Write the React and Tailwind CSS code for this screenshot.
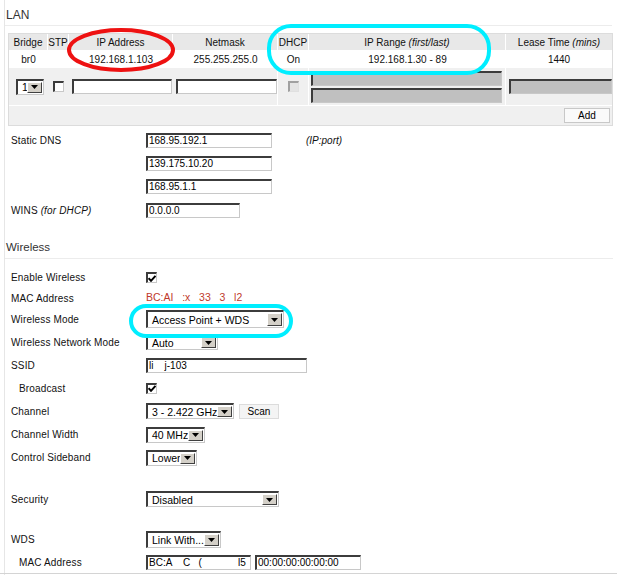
import React from 'react';

const font = { fontFamily: "'Liberation Sans', Arial, sans-serif" };

const Field = ({ w, children, disabled, className = '' }) => (
  <div
    className={`h-[15px] border-t-2 border-l-2 border-r border-b border-t-[#3c3c3c] border-l-[#3c3c3c] border-r-[#c8c8c8] border-b-[#c8c8c8] pl-[1px] text-[10px] leading-[12px] text-black whitespace-pre overflow-hidden ${disabled ? 'bg-[#c0c0c0]' : 'bg-white'} ${className}`}
    style={{ width: w }}
  >
    {children}
  </div>
);

const Arrow = () => (
  <div className="w-[15px] h-full bg-[#d4d0c8] border border-t-white border-l-white border-r-[#404040] border-b-[#404040] flex items-center justify-center shrink-0">
    <svg width="7" height="4" viewBox="0 0 7 4">
      <path d="M0 0h7L3.5 4z" fill="#000" />
    </svg>
  </div>
);

const Select = ({ w, h = 16, children }) => (
  <div
    className="flex border-t-2 border-l-2 border-r border-b border-t-[#3c3c3c] border-l-[#3c3c3c] border-r-[#c8c8c8] border-b-[#c8c8c8] bg-white p-[1px]"
    style={{ width: w, height: h }}
  >
    <div className="flex-1 pl-[3px] text-[10.5px] leading-[12px] flex items-center text-black whitespace-nowrap overflow-hidden">{children}</div>
    <Arrow />
  </div>
);

const Check = ({ checked, disabled }) => (
  <div
    className={`w-[11px] h-[11px] border-t-2 border-l-2 border-r border-b flex items-center justify-center ${
      disabled
        ? 'bg-[#e4e4e4] border-t-[#a0a0a0] border-l-[#a0a0a0] border-r-[#e0e0e0] border-b-[#e0e0e0]'
        : 'bg-white border-t-[#3c3c3c] border-l-[#3c3c3c] border-r-[#c8c8c8] border-b-[#c8c8c8]'
    }`}
  >
    {checked && (
      <svg width="8" height="7" viewBox="0 0 8 7">
        <path d="M0.5 3.2 L3 5.8 L7.5 0.8" stroke="#000" strokeWidth="2" fill="none" />
      </svg>
    )}
  </div>
);

const Row = ({ h, label, indent, children }) => (
  <div className="flex items-center" style={{ height: h }}>
    <div className={`w-[141px] shrink-0 text-[10px] tracking-[0.15px] text-[#111] ${indent ? 'pl-[14px]' : 'pl-[6px]'}`}>
      {label}
    </div>
    <div className="flex items-center gap-[4px]">{children}</div>
  </div>
);

const cols = [39, 21, 104, 105, 31, 197];

export default function App() {
  return (
    <div className="relative w-[617px] h-[575px] overflow-hidden bg-white" style={font}>
      <div className="ml-[4px] mr-[5px] border-l border-[#e6e6e6] h-full">
        {/* LAN */}
        <div className="h-[26px] pt-[6px] pl-[1px] text-[12px] text-[#333] border-b border-[#ececec]">LAN</div>

        <div className="mt-[7px] ml-[3px] w-[605px] border border-[#dcdcdc] text-[10px] text-[#111]">
          <div className="flex h-[16px] bg-[#e8e8e8]">
            {['Bridge', 'STP', 'IP Address', 'Netmask', 'DHCP'].map((t, i) => (
              <div key={t} className="flex items-center justify-center border-r border-white" style={{ width: cols[i] }}>
                {t}
              </div>
            ))}
            <div className="flex items-center justify-center border-r border-white" style={{ width: cols[5] }}>
              IP Range&nbsp;<i>(first/last)</i>
            </div>
            <div className="flex-1 flex items-center justify-center">
              Lease Time&nbsp;<i>(mins)</i>
            </div>
          </div>
          <div className="flex h-[18px] bg-white">
            {['br0', '', '192.168.1.103', '255.255.255.0', 'On', '192.168.1.30 - 89'].map((t, i) => (
              <div key={i} className="flex items-center justify-center" style={{ width: cols[i] }}>
                {t}
              </div>
            ))}
            <div className="flex-1 flex items-center justify-center">1440</div>
          </div>
          <div className="flex h-[38px] bg-[#f0f0f0] border-b border-white">
            <div className="flex items-center justify-end pr-[4px]" style={{ width: cols[0] }}>
              <Select w={28} h={16}>1</Select>
            </div>
            <div className="flex items-center justify-center" style={{ width: cols[1] }}>
              <Check />
            </div>
            <div className="flex items-center justify-end pr-[1px]" style={{ width: cols[2] }}>
              <Field w={100} />
            </div>
            <div className="flex items-center justify-start pl-[3px] border-r border-white" style={{ width: cols[3] }}>
              <Field w={101} />
            </div>
            <div className="flex items-center justify-center border-r border-white" style={{ width: cols[4] }}>
              <Check disabled />
            </div>
            <div className="flex flex-col justify-center gap-[2px] pl-[2px] border-r border-white" style={{ width: cols[5] }}>
              <Field w={191} disabled />
              <Field w={191} disabled />
            </div>
            <div className="flex-1 flex items-center pl-[3px]">
              <Field w={103} disabled />
            </div>
          </div>
          <div className="h-[19px] bg-[#f0f0f0] flex items-center justify-end pr-[2px]">
            <div className="w-[46px] h-[15px] bg-[#fafafa] border border-[#c8c8c8] flex items-center justify-center text-[10px] text-black">
              Add
            </div>
          </div>
        </div>

        {/* DNS / WINS */}
        <div className="pt-[3px]">
          <Row h={23} label="Static DNS">
            <Field w={126}>168.95.192.1</Field>
            <span className="ml-[30px] text-[10px] italic text-[#111]">(IP:port)</span>
          </Row>
          <Row h={23} label="">
            <Field w={126}>139.175.10.20</Field>
          </Row>
          <Row h={23} label="">
            <Field w={126}>168.95.1.1</Field>
          </Row>
          <Row h={24} label={<>WINS <i>(for DHCP)</i></>}>
            <Field w={94}>0.0.0.0</Field>
          </Row>
        </div>

        {/* Wireless */}
        <div className="h-[37px] flex items-end pb-[2px] pl-[1px] text-[11.5px] text-[#333] border-b border-[#ececec] mr-[-1px]">
          Wireless
        </div>
        <div className="pt-[8px]">
          <Row h={21} label="Enable Wireless">
            <Check checked />
          </Row>
          <Row h={20} label="MAC Address">
            <span className="text-[10.5px] text-[#c0392b] whitespace-pre">BC:AI   :x   33   3   l2</span>
          </Row>
          <Row h={22} label="Wireless Mode">
            <Select w={138} h={18}>Access Point + WDS</Select>
          </Row>
          <Row h={24} label="Wireless Network Mode">
            <Select w={72}>Auto</Select>
          </Row>
          <Row h={23} label="SSID">
            <Field w={161}>li    j-103</Field>
          </Row>
          <Row h={22} label="Broadcast" indent>
            <Check checked />
          </Row>
          <Row h={24} label="Channel">
            <Select w={88}>3 - 2.422 GHz</Select>
            <div className="ml-[1px] w-[40px] h-[15px] bg-[#f4f4f4] border border-[#dcdcdc] flex items-center justify-center text-[10px] text-black">
              Scan
            </div>
          </Row>
          <Row h={23} label="Channel Width">
            <Select w={59}>40 MHz</Select>
          </Row>
          <Row h={23} label="Control Sideband">
            <Select w={51}>Lower</Select>
          </Row>
          <div className="h-[19px]" />
          <Row h={22} label="Security">
            <Select w={133}>Disabled</Select>
          </Row>
          <div className="h-[17px]" />
          <Row h={24} label="WDS">
            <Select w={75} h={17}>Link With...</Select>
          </Row>
          <Row h={23} label="MAC Address" indent>
            <Field w={105}>BC:A    C   (             l5</Field>
            <Field w={106}>00:00:00:00:00:00</Field>
          </Row>
        </div>
      </div>
      <div className="absolute left-0 right-0 top-[573px] border-t border-[#d4d4d4]" />

      {/* annotations */}
      <svg className="absolute left-0 top-0 pointer-events-none" width="617" height="575">
        <ellipse cx="121" cy="50" rx="52" ry="20" fill="none" stroke="#ee1111" strokeWidth="4" />
        <rect x="269" y="26" width="220" height="47" rx="22" fill="none" stroke="#00eeff" strokeWidth="4" />
        <rect x="131" y="306" width="160" height="30" rx="15" fill="none" stroke="#00eeff" strokeWidth="4" />
      </svg>
    </div>
  );
}
